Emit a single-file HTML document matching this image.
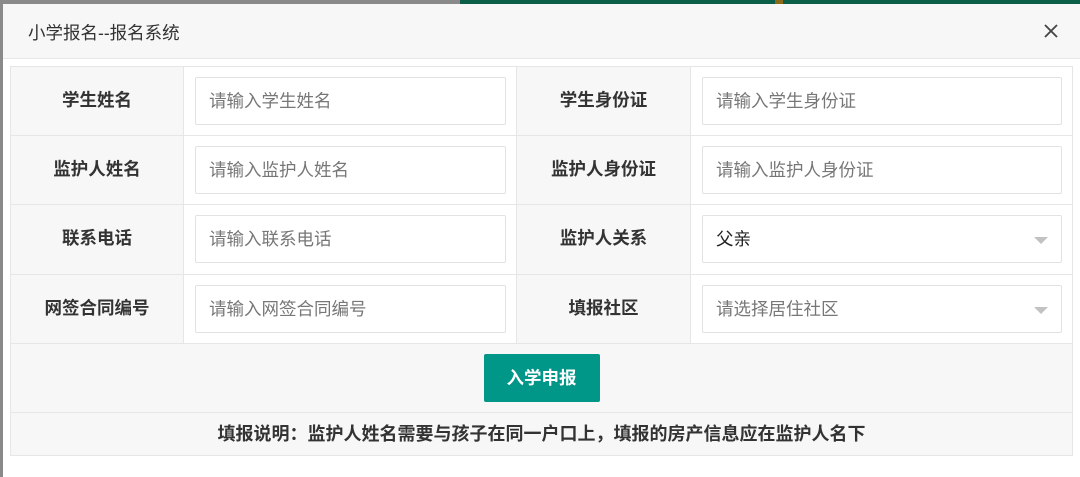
<!DOCTYPE html>
<html><head><meta charset="utf-8"><style>
*{box-sizing:border-box;margin:0;padding:0}
body{width:1080px;height:477px;overflow:hidden;background:#8a8a8a;font-family:"Liberation Sans","Noto Sans CJK SC",sans-serif;position:relative}
.topg{position:absolute;left:460px;top:0;width:620px;height:4px;background:#0b5e48}
.brn{position:absolute;left:775px;top:0;width:8px;height:4px;background:#8a6a1a}
.modal{position:absolute;left:3px;top:4px;width:1077px;height:473px;background:#fff}
.hd{height:55px;background:#f7f7f7;border-bottom:1px solid #e8e8e8;font-size:17.5px;color:#333;padding:16px 0 0 25px}
.x{position:absolute;right:22px;top:20px}
table{position:absolute;left:7px;top:62px;width:1063px;border-collapse:collapse}
td{border:1px solid #e6e6e6;height:69.2px;padding-bottom:3px}
td.l{background:#f7f7f7;text-align:center;font-weight:bold;font-size:17.5px;color:#333}
td.v{padding:0 10px 0 11px}
.in{height:48px;border:1px solid #e2e2e2;border-radius:2px;font-size:17.5px;color:#777;padding:10px 0 0 13px;position:relative;background:#fff}
.in.d{color:#222}
.ar{position:absolute;right:13px;top:21px;border-left:7px solid transparent;border-right:7px solid transparent;border-top:7px solid #c2c2c2}
.br{background:#f7f7f7;text-align:center;padding:0}
.btn{display:inline-block;width:116px;height:48px;background:#009688;color:#fff;font-weight:bold;font-size:17.5px;line-height:48px;border-radius:2px}
td.nt{background:#f7f7f7;text-align:center;font-weight:bold;font-size:18px;color:#333;height:43px;padding-bottom:2px}
</style></head><body>
<div class="topg"></div><div class="brn"></div>
<div class="modal">
<div class="hd">小学报名--报名系统</div>
<svg class="x" width="14" height="14" viewBox="0 0 14 14"><path d="M1 1L13 13M13 1L1 13" stroke="#444" stroke-width="1.8"/></svg>
<table>
<colgroup><col style="width:173px"><col style="width:333px"><col style="width:174px"><col></colgroup>
<tr><td class="l">学生姓名</td><td class="v"><div class="in">请输入学生姓名</div></td><td class="l">学生身份证</td><td class="v"><div class="in">请输入学生身份证</div></td></tr>
<tr><td class="l">监护人姓名</td><td class="v"><div class="in">请输入监护人姓名</div></td><td class="l">监护人身份证</td><td class="v"><div class="in">请输入监护人身份证</div></td></tr>
<tr><td class="l">联系电话</td><td class="v"><div class="in">请输入联系电话</div></td><td class="l">监护人关系</td><td class="v"><div class="in d">父亲<span class="ar"></span></div></td></tr>
<tr><td class="l">网签合同编号</td><td class="v"><div class="in">请输入网签合同编号</div></td><td class="l">填报社区</td><td class="v"><div class="in">请选择居住社区<span class="ar"></span></div></td></tr>
<tr><td colspan="4" class="br"><span class="btn">入学申报</span></td></tr>
<tr><td colspan="4" class="nt">填报说明：监护人姓名需要与孩子在同一户口上，填报的房产信息应在监护人名下</td></tr>
</table>
</div>
</body></html>
